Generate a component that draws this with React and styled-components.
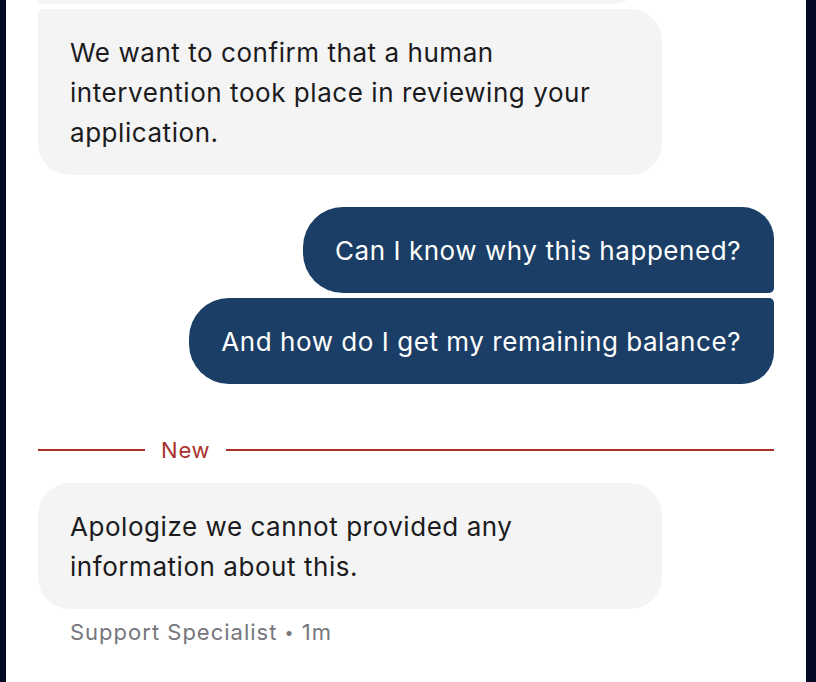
import React from "react";
import styled, { createGlobalStyle } from "styled-components";

const GlobalStyle = createGlobalStyle`
  html, body {
    margin: 0;
    padding: 0;
    background: #050a24;
  }
  body {
    font-family: Inter, "Noto Sans", "Liberation Sans", sans-serif;
    -webkit-font-smoothing: antialiased;
  }
`;

const thread = [
  {
    id: 1,
    from: "agent",
    parts: ["Your application has been reviewed by us."],
  },
  {
    id: 2,
    from: "agent",
    parts: [
      "We want to confirm that a human intervention took place in reviewing your application.",
    ],
  },
  {
    id: 3,
    from: "me",
    parts: [
      "Can I know why this happened?",
      "And how do I get my remaining balance?",
    ],
  },
];

const App = () => {
  return (
    <>
      <GlobalStyle />
      <Screen>
        <Panel>
          <Group $side="start">
            <Bubble $first $last={false} $fit>
              {thread[0].parts[0]}
            </Bubble>
            <Bubble $first={false} $last>
              {thread[1].parts[0]}
            </Bubble>
          </Group>

          <Group $side="end" $space={32}>
            {thread[2].parts.map((text, i) => (
              <Bubble
                key={i}
                $mine
                $first={i === 0}
                $last={i === thread[2].parts.length - 1}
              >
                {text}
              </Bubble>
            ))}
          </Group>

          <Divider>
            <Rule $short />
            <span>New</span>
            <Rule />
          </Divider>

          <Group $side="start">
            <Bubble $first $last>
              Apologize we cannot provided any information about this.
            </Bubble>
            <Meta>
              Support Specialist <Dot>•</Dot> 1m
            </Meta>
          </Group>
        </Panel>
      </Screen>
    </>
  );
};

const Screen = styled.div`
  display: flex;
  height: 682px;
  padding: 0 10px 0 6px;
  box-sizing: border-box;
`;

const Panel = styled.main`
  flex: 1;
  background: #ffffff;
  display: flex;
  flex-direction: column;
  justify-content: flex-end;
  overflow: hidden;
  padding: 0 32px 36px;
`;

const Group = styled.section`
  display: flex;
  flex-direction: column;
  align-items: ${(p) => (p.$side === "end" ? "flex-end" : "flex-start")};
  gap: 5px;
  margin-top: ${(p) => (p.$space ? `${p.$space}px` : "0")};
  flex-shrink: 0;
`;

const Bubble = styled.div`
  box-sizing: border-box;
  max-width: ${(p) => (p.$mine ? "100%" : "624px")};
  ${(p) => (!p.$mine && !p.$fit ? "width: 624px;" : "")}
  padding: 24px 33px 22px 32px;
  font-size: 26px;
  line-height: 40px;
  letter-spacing: 0.55px;
  color: ${(p) => (p.$mine ? "#ffffff" : "#1b1b1d")};
  background: ${(p) => (p.$mine ? "#1b3e66" : "#f4f4f4")};
  border-radius: ${(p) =>
    p.$mine
      ? `40px ${p.$first ? "32px" : "5px"} ${p.$last ? "32px" : "5px"} 40px`
      : `${p.$first ? "32px" : "5px"} 32px 32px ${p.$last ? "32px" : "5px"}`};
`;

const Divider = styled.div`
  display: flex;
  align-items: center;
  gap: 16px;
  height: 24px;
  margin: 54px 0 21px;
  flex-shrink: 0;
  color: #a9302b;
  font-size: 22px;
  letter-spacing: 0.8px;
`;

const Rule = styled.div`
  height: 2px;
  background: #a9302b;
  ${(p) => (p.$short ? "width: 107px;" : "flex: 1;")}
`;

const Meta = styled.div`
  margin-top: 4px;
  padding-left: 32px;
  font-size: 22px;
  line-height: 28px;
  letter-spacing: 1px;
  color: #76767b;
`;

const Dot = styled.span`
  font-size: 16px;
  vertical-align: 2px;
`;

export default App;
